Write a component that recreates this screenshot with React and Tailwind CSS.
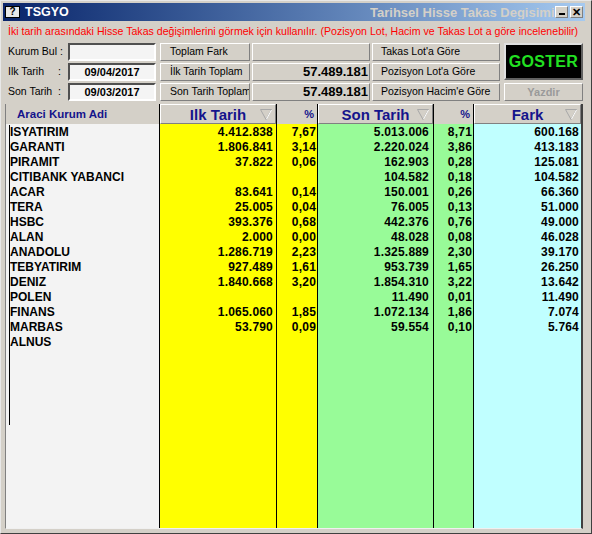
import React from 'react';

const rows = [
    ['ISYATIRIM', '4.412.838', '7,67', '5.013.006', '8,71', '600.168'],
    ['GARANTI', '1.806.841', '3,14', '2.220.024', '3,86', '413.183'],
    ['PIRAMIT', '37.822', '0,06', '162.903', '0,28', '125.081'],
    ['CITIBANK YABANCI', '', '', '104.582', '0,18', '104.582'],
    ['ACAR', '83.641', '0,14', '150.001', '0,26', '66.360'],
    ['TERA', '25.005', '0,04', '76.005', '0,13', '51.000'],
    ['HSBC', '393.376', '0,68', '442.376', '0,76', '49.000'],
    ['ALAN', '2.000', '0,00', '48.028', '0,08', '46.028'],
    ['ANADOLU', '1.286.719', '2,23', '1.325.889', '2,30', '39.170'],
    ['TEBYATIRIM', '927.489', '1,61', '953.739', '1,65', '26.250'],
    ['DENIZ', '1.840.668', '3,20', '1.854.310', '3,22', '13.642'],
    ['POLEN', '', '', '11.490', '0,01', '11.490'],
    ['FINANS', '1.065.060', '1,85', '1.072.134', '1,86', '7.074'],
    ['MARBAS', '53.790', '0,09', '59.554', '0,10', '5.764'],
    ['ALNUS', '', '', '', '', ''],
];

// extra empty lines in the name column (row marker line goes down to 20 rows)
const emptyRows = [0, 1, 2, 3, 4];

const cols = [
    { title: 'Ilk Tarih', w: 'w-[117px]', bg: 'bg-[#ffff00]', pr: 'pr-[3px]', big: true, line: true },
    { title: '%', w: 'w-[41px]', bg: 'bg-[#ffff00]', pr: 'pr-[1px]', line: true },
    { title: 'Son Tarih', w: 'w-[116px]', bg: 'bg-[#98fb98]', pr: 'pr-[4px]', big: true, line: true },
    { title: '%', w: 'w-[40px]', bg: 'bg-[#98fb98]', pr: 'pr-[1px]', line: true },
    { title: 'Fark', w: 'w-[107px]', bg: 'bg-[#c0ffff]', pr: 'pr-[2px]', big: true, line: false },
];

const raised = 'border border-t-white border-l-white border-r-[#808080] border-b-[#808080]';
const sunken = 'border-2 border-t-[#505050] border-l-[#505050] border-r-white border-b-white';

const SortArrow = () => (
    <svg width="14" height="14" viewBox="0 0 14 14" className="shrink-0">
        <path d="M1.5 2.5 H12.5 L7 12.5 Z" fill="none" stroke="#a8a8a8" />
        <path d="M12.5 3 L7.5 12" stroke="#ffffff" />
    </svg>
);

const App = () => {
    return (
        <div className="w-[592px] h-[534px] flex flex-col bg-[#d4d0c8] border border-t-[#e8e8e8] border-l-[#e8e8e8] border-r-[#404040] border-b-[#404040] pt-[2px] pl-[2px] pr-[6px] pb-[4px] font-['Liberation_Sans',Arial,sans-serif] text-black overflow-hidden">
            {/* title bar */}
            <div className="h-[18px] shrink-0 flex items-center bg-gradient-to-r from-[#0a246a] to-[#a6caf0]">
                <div className="ml-[2px] w-[15px] h-[12px] bg-[#e8e8e8] border border-black flex items-center justify-center text-[10px] font-bold leading-none">?</div>
                <span className="ml-[5px] text-white font-bold text-[12.5px] leading-none">TSGYO</span>
                <div className="ml-auto w-[184px] overflow-hidden whitespace-nowrap text-[#d4d0c8] font-bold text-[13px] leading-none">
                    Tarihsel Hisse Takas Degisimi
                </div>
                <div className={`ml-[1px] w-[13px] h-[12px] bg-[#d4d0c8] ${raised} flex items-end justify-center pb-[2px]`}>
                    <div className="w-[6px] h-[2px] bg-black"></div>
                </div>
                <div className={`ml-[2px] mr-[2px] w-[13px] h-[12px] bg-[#d4d0c8] ${raised} flex items-center justify-center text-[11px] font-bold leading-none`}>
                    ✕
                </div>
            </div>

            {/* info line */}
            <div className="mt-[4px] h-[13px] pl-[5px] text-[10.6px] leading-[13px] text-[#ff0000] whitespace-nowrap">
                İki tarih arasındaki Hisse Takas değişimlerini görmek için kullanılır. (Pozisyon Lot, Hacim ve Takas Lot a göre incelenebilir)
            </div>

            {/* controls */}
            <div className="mt-[5px] pl-[5px] flex text-[10.5px]">
                <div className="w-[60px] flex flex-col gap-[2px]">
                    <div className="h-[18px] flex items-center">Kurum Bul :</div>
                    <div className="h-[18px] flex items-center justify-between w-[53px]"><span>Ilk Tarih</span><span>:</span></div>
                    <div className="h-[18px] flex items-center justify-between w-[53px]"><span>Son Tarih</span><span>:</span></div>
                </div>
                <div className="w-[88px] flex flex-col gap-[2px]">
                    <div className={`h-[18px] bg-[#f4f4f4] ${sunken}`}></div>
                    <div className={`h-[18px] bg-[#f4f4f4] ${sunken} flex items-center justify-center font-bold text-[11px]`}>09/04/2017</div>
                    <div className={`h-[18px] bg-[#f4f4f4] ${sunken} flex items-center justify-center font-bold text-[11px]`}>09/03/2017</div>
                </div>
                <div className="ml-[4px] w-[90px] flex flex-col gap-[2px]">
                    <div className={`h-[18px] ${raised} flex items-center pl-[9px] whitespace-nowrap overflow-hidden`}>Toplam Fark</div>
                    <div className={`h-[18px] ${raised} flex items-center pl-[9px] whitespace-nowrap overflow-hidden`}>İlk Tarih Toplam</div>
                    <div className={`h-[18px] ${raised} flex items-center pl-[9px] whitespace-nowrap overflow-hidden`}>Son Tarih Toplam</div>
                </div>
                <div className="ml-[2px] w-[118px] flex flex-col gap-[2px]">
                    <div className={`h-[18px] ${raised}`}></div>
                    <div className={`h-[18px] ${raised} flex items-center justify-end pr-[1px] font-bold text-[13px]`}>57.489.181</div>
                    <div className={`h-[18px] ${raised} flex items-center justify-end pr-[1px] font-bold text-[13px]`}>57.489.181</div>
                </div>
                <div className="ml-[2px] w-[128px] flex flex-col gap-[2px]">
                    <div className={`h-[18px] ${raised} flex items-center pl-[8px] whitespace-nowrap`}>Takas Lot'a Göre</div>
                    <div className={`h-[18px] ${raised} flex items-center pl-[8px] whitespace-nowrap`}>Pozisyon Lot'a Göre</div>
                    <div className={`h-[18px] ${raised} flex items-center pl-[8px] whitespace-nowrap`}>Pozisyon Hacim'e Göre</div>
                </div>
                <div className="ml-[4px] w-[79px] flex flex-col">
                    <div className="h-[37px] bg-black border-2 border-t-[#e0e0e0] border-l-[#e0e0e0] border-r-[#606060] border-b-[#606060] flex items-center justify-center text-[#22e022] font-bold text-[16px] tracking-[0.3px]">
                        GOSTER
                    </div>
                    <div className={`mt-[3px] h-[18px] ${raised} flex items-center justify-center font-bold text-[11px] text-[#9a9a9a]`}>
                        Yazdir
                    </div>
                </div>
            </div>

            {/* grid */}
            <div className="mt-[3px] mx-[2px] flex-1 flex border-l border-l-[#808080] border-r-2 border-r-[#404040] border-b border-b-[#f0f0f0] text-[12px] font-bold leading-[15px]">
                {/* name column */}
                <div className="w-[154px] flex flex-col border-r border-black">
                    <div className="h-[20px] shrink-0 flex items-center pl-[11px] text-[#14148c] text-[11.5px]">Araci Kurum Adi</div>
                    <div className="flex-1 bg-[#f3f3f3] pl-[3px] pt-[1px]">
                        {rows.map((r) => (
                            <div key={r[0]} className="h-[15px] border-l border-black whitespace-nowrap">{r[0]}</div>
                        ))}
                        {emptyRows.map((i) => (
                            <div key={i} className="h-[15px] border-l border-black"></div>
                        ))}
                    </div>
                </div>

                {cols.map((c, ci) => (
                    <div key={ci} className={`${c.w} flex flex-col ${c.line ? 'border-r border-black' : ''}`}>
                        {c.big ? (
                            <div className={`h-[20px] shrink-0 flex items-center ${raised}`}>
                                <div className="w-[16px]"></div>
                                <span className="flex-1 text-center text-[15px] text-[#14148c]">{c.title}</span>
                                <div className="w-[16px] flex items-center"><SortArrow /></div>
                            </div>
                        ) : (
                            <div className="h-[20px] shrink-0 flex items-center justify-end pr-[3px] text-[11px] text-[#14148c]">{c.title}</div>
                        )}
                        <div className={`flex-1 ${c.bg} pt-[1px] tracking-[0.2px]`}>
                            {rows.map((r) => (
                                <div key={r[0]} className={`h-[15px] text-right ${c.pr}`}>{r[ci + 1]}</div>
                            ))}
                        </div>
                    </div>
                ))}
            </div>
        </div>
    );
};

export default App;
